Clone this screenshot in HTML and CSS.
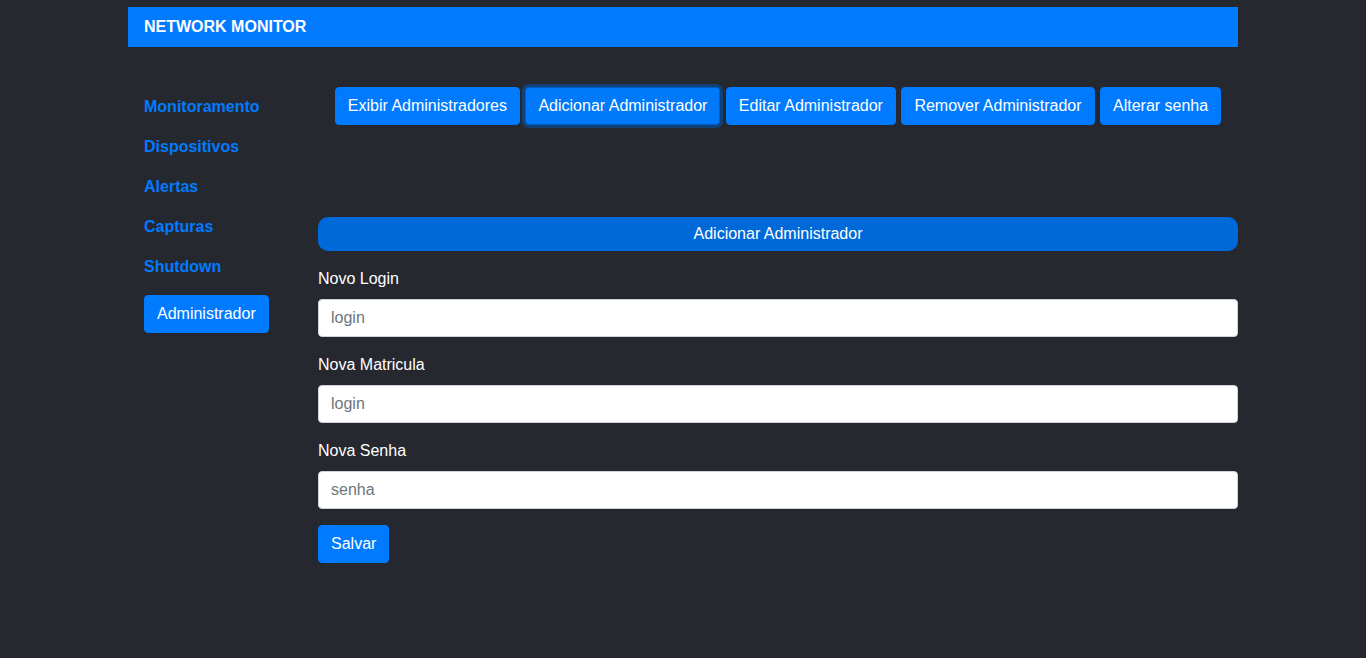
FILE: index.html
```html
<!DOCTYPE html>
<html lang="pt">
<head>
<meta charset="utf-8">
<title>Network Monitor</title>
<link rel="stylesheet" href="styles.css">
</head>
<body>
<div class="container">
  <header class="topbar">NETWORK MONITOR</header>
  <div class="row">
    <nav class="sidebar">
      <a class="side-link" href="#">Monitoramento</a>
      <a class="side-link" href="#">Dispositivos</a>
      <a class="side-link" href="#">Alertas</a>
      <a class="side-link" href="#">Capturas</a>
      <a class="side-link" href="#">Shutdown</a>
      <div class="side-item"><button class="btn">Administrador</button></div>
    </nav>
    <main class="main">
      <div class="actions">
        <button class="btn">Exibir Administradores</button>
        <button class="btn focused">Adicionar Administrador</button>
        <button class="btn">Editar Administrador</button>
        <button class="btn">Remover Administrador</button>
        <button class="btn">Alterar senha</button>
      </div>
      <div class="section-title">Adicionar Administrador</div>
      <form class="form">
        <div class="group">
          <label class="label">Novo Login</label>
          <input class="input" type="text" placeholder="login">
        </div>
        <div class="group">
          <label class="label">Nova Matricula</label>
          <input class="input" type="text" placeholder="login">
        </div>
        <div class="group">
          <label class="label">Nova Senha</label>
          <input class="input" type="password" placeholder="senha">
        </div>
        <button class="btn" type="button">Salvar</button>
      </form>
    </main>
  </div>
</div>
</body>
</html>
```

FILE: styles.css
```css
* { box-sizing: border-box; }
html, body { margin: 0; padding: 0; }
body {
  background: #262830;
  font-family: "Liberation Sans", Arial, sans-serif;
  font-size: 16px;
  line-height: 24px;
  color: #fff;
  height: 658px;
}
.container {
  width: 1110px;
  margin: 0 auto;
  padding-top: 7px;
}
.topbar {
  background: #007bff;
  height: 40px;
  padding: 0 16px;
  font-weight: bold;
  line-height: 40px;
  color: #fff;
}
.row {
  display: flex;
  margin-top: 40px;
}
.sidebar {
  width: 160px;
  flex: none;
  margin-right: 30px;
  display: flex;
  flex-direction: column;
}
.side-link {
  display: block;
  padding: 8px 16px;
  color: #007bff;
  font-weight: bold;
  text-decoration: none;
}
.side-item {
  padding: 8px 16px;
}
.main {
  flex: 1;
  min-width: 0;
}
.btn {
  display: inline-block;
  font-family: inherit;
  font-size: 16px;
  line-height: 24px;
  padding: 6px 12px;
  border: 1px solid #007bff;
  border-radius: 4px;
  background: #007bff;
  color: #fff;
  cursor: pointer;
  vertical-align: middle;
}
.btn.focused {
  background: #0079fa;
  border-color: #0060c8;
  box-shadow: 0 0 0 3px rgba(0, 86, 179, 0.55);
}
.actions {
  text-align: center;
}
.actions .btn { margin: 0 0.5px; }
.section-title {
  margin-top: 92px;
  background: #0069d9;
  border-radius: 10px;
  height: 34px;
  line-height: 34px;
  text-align: center;
  color: #fff;
  margin-bottom: 16px;
}
.group {
  margin-bottom: 16px;
}
.label {
  display: block;
  margin-bottom: 8px;
  color: #fff;
}
.input {
  display: block;
  width: 100%;
  height: 38px;
  padding: 6px 12px;
  font-family: inherit;
  font-size: 16px;
  line-height: 24px;
  color: #495057;
  background: #fff;
  border: 1px solid #ced4da;
  border-radius: 4px;
}
.input::placeholder { color: #6c757d; opacity: 1; }
```
